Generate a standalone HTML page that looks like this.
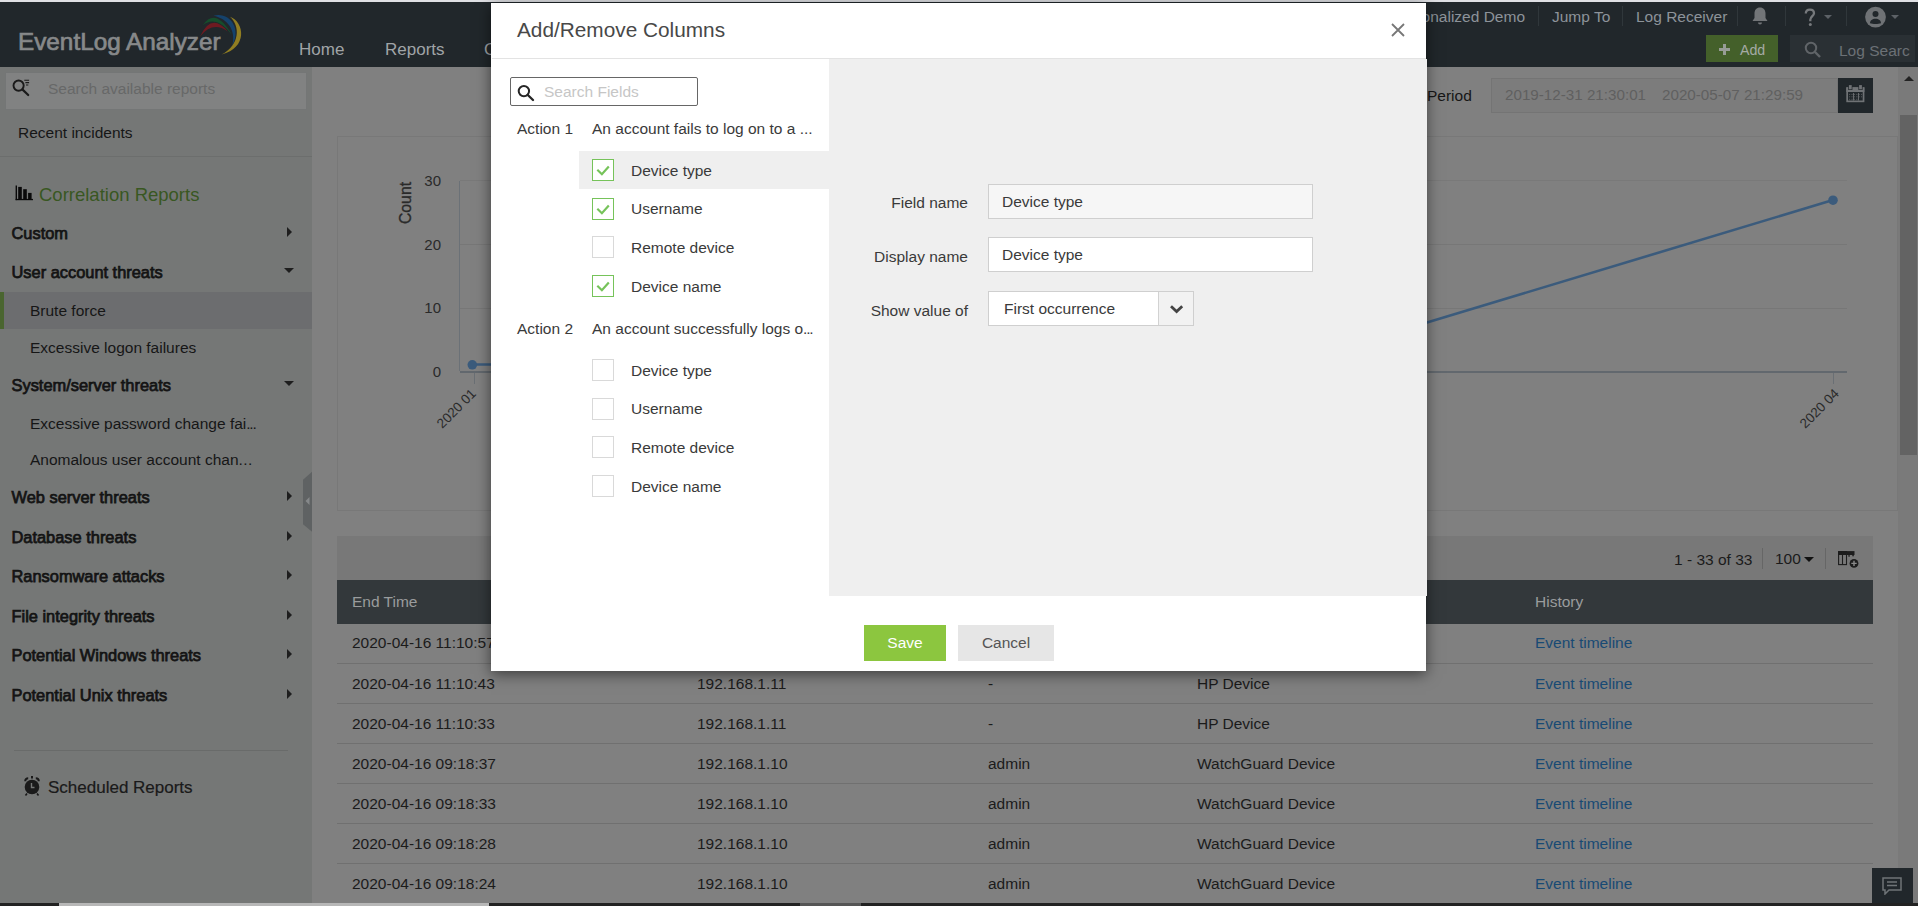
<!DOCTYPE html>
<html><head><meta charset="utf-8">
<style>
*{box-sizing:border-box;margin:0;padding:0}
html,body{width:1918px;height:906px;overflow:hidden;background:#808080;font-family:"Liberation Sans",sans-serif;}
.a{position:absolute;white-space:nowrap}
.sl{font-size:15.5px;color:#161616}
.sb{font-size:16.4px;color:#141414;-webkit-text-stroke:0.75px #141414}
.arr{width:0;height:0;border-top:5px solid transparent;border-bottom:5px solid transparent;border-left:5px solid #1e1e1e}
.arrd{width:0;height:0;border-left:5px solid transparent;border-right:5px solid transparent;border-top:5px solid #1e1e1e}
.hdt{font-size:15.5px;color:#8d939a}
.sep{width:1px;background:#30373b}
.cell{font-size:15.5px;color:#1b1b1b}
.link{font-size:15.5px;color:#184a74}
.rowsep{height:1px;background:#707070}
.ml{font-size:15.5px;color:#3a3a3a}
.cb{width:22px;height:22px;border:1px solid #d9d9d9;background:#fff}
.cb.on{border:1.5px solid #76c35a}
.fl{font-size:15.5px;color:#3a3a3a;text-align:right}
.inp{height:35px;border:1px solid #cfcfcf;background:#fff;font-size:15.5px;color:#3a3a3a;padding-left:13px;line-height:34px}
</style></head>
<body>
<!-- top strip + header -->
<div class="a" style="left:0;top:0;width:1918px;height:2px;background:#dfe0e4"></div>
<div class="a" style="left:0;top:2px;width:1918px;height:65px;background:#21272b"></div>
<div class="a" style="left:18px;top:28px;font-size:24.3px;color:#87898a;-webkit-text-stroke:0.7px #87898a">EventLog Analyzer</div>
<svg class="a" style="left:0;top:0" width="260" height="67" viewBox="0 0 260 67">
  <path d="M200 36.5 Q211.5 12 227.8 31.5 Q213 20.5 200 36.5Z" fill="#6e1a21"/>
  <path d="M202.8 25.3 Q215.5 6.5 232 35 Q216.5 14.5 202.8 25.3Z" fill="#164d2c"/>
  <path d="M213.5 15.8 C229 11.5, 242 28, 232.3 45.8 C236.5 30, 227 18.5, 213.5 15.8Z" fill="#15426c"/>
  <path d="M230 16.8 C244.5 22, 248 48, 221.5 54.6 C240.5 45, 240 25.5, 230 16.8Z" fill="#917e22"/>
</svg>
<div class="a hdt" style="left:299px;top:40px;font-size:17px;color:#a0a4a7">Home</div>
<div class="a hdt" style="left:385px;top:40px;font-size:17px;color:#a0a4a7">Reports</div>
<div class="a hdt" style="left:484px;top:40px;font-size:17px;color:#a0a4a7">C</div>

<div class="a hdt" style="left:1325px;top:8px;width:200px;text-align:right">Personalized Demo</div>
<div class="a sep" style="left:1538px;top:6px;height:20px"></div>
<div class="a hdt" style="left:1552px;top:8px">Jump To</div>
<div class="a sep" style="left:1622px;top:6px;height:20px"></div>
<div class="a hdt" style="left:1636px;top:8px">Log Receiver</div>
<div class="a sep" style="left:1737px;top:6px;height:20px"></div>
<svg class="a" style="left:1751px;top:6px" width="18" height="20" viewBox="0 0 18 20"><path d="M9 1.5c-3.5 0-5.5 2.6-5.5 6v4.5L1.5 15h15l-2-3V7.5c0-3.4-2-6-5.5-6z" fill="#727578"/><path d="M7 16.5h4a2 2 0 0 1-4 0z" fill="#727578"/></svg>
<div class="a sep" style="left:1785px;top:6px;height:20px"></div>
<svg class="a" style="left:1800px;top:6px" width="20" height="22" viewBox="0 0 20 22"><path d="M5.8 7.6C5.8 5 7.6 3.6 10 3.6C12.5 3.6 14 5.2 14 7.2C14 10 10.3 10.4 10.3 13.8V15.2" stroke="#76797c" stroke-width="2.3" fill="none"/><circle cx="10.3" cy="18.4" r="1.5" fill="#76797c"/></svg>
<div class="a arrd" style="left:1824px;top:15px;border-top-color:#5c6166;border-left-width:4px;border-right-width:4px;border-top-width:4px"></div>
<div class="a sep" style="left:1846px;top:6px;height:20px"></div>
<svg class="a" style="left:1865px;top:6px" width="22" height="22" viewBox="0 0 22 22"><circle cx="10.5" cy="11.1" r="10.4" fill="#6f7275"/><circle cx="10.5" cy="8" r="3" fill="#21272b"/><path d="M5 17.3c0-3 2.4-4.6 5.5-4.6s5.5 1.6 5.5 4.6c-1.5 0.5-3.5 0.8-5.5 0.8s-4-0.3-5.5-0.8z" fill="#21272b"/></svg>
<div class="a arrd" style="left:1891px;top:15px;border-top-color:#5c6166;border-left-width:4px;border-right-width:4px;border-top-width:4px"></div>

<div class="a" style="left:1706px;top:35px;width:72px;height:27px;background:#44602a"></div>
<div class="a" style="left:1719px;top:48px;width:11px;height:2.5px;background:#979c96"></div>
<div class="a" style="left:1723.3px;top:44px;width:2.5px;height:11px;background:#979c96"></div>
<div class="a hdt" style="left:1740px;top:42px;font-size:14.2px;color:#a5aaa5">Add</div>
<div class="a" style="left:1790px;top:35px;width:125px;height:27px;background:#2a3034"></div>
<svg class="a" style="left:1804px;top:41px" width="18" height="18" viewBox="0 0 18 18"><circle cx="7" cy="7" r="5.2" stroke="#606468" stroke-width="2" fill="none"/><path d="M11 11l5 5" stroke="#606468" stroke-width="2.4"/></svg>
<div class="a hdt" style="left:1839px;top:41.5px;color:#6c7176;width:71px;overflow:hidden">Log Search</div>

<!-- sidebar -->
<div class="a" style="left:0;top:67px;width:312px;height:836px;background:#757776"></div>
<div class="a" style="left:5px;top:72px;width:302px;height:38px;background:#818282;border:1px solid #747676"></div>
<svg class="a" style="left:10px;top:76px" width="22" height="22" viewBox="10 76 22 22"><circle cx="18.6" cy="85.6" r="5.1" stroke="#1a1a1a" stroke-width="1.9" fill="none"/><path d="M22.6 89.6L28.2 95" stroke="#1a1a1a" stroke-width="2.2" stroke-linecap="round"/><path d="M24.3 80.3h4.8M25.4 82.6h3.7M26 85h2.3" stroke="#1a1a1a" stroke-width="1.1"/></svg>
<div class="a sl" style="left:48px;top:80px;color:#676868">Search available reports</div>
<div class="a sl" style="left:18px;top:124px">Recent incidents</div>
<div class="a" style="left:0;top:156px;width:312px;height:1px;background:#6c6e6d"></div>
<svg class="a" style="left:14px;top:184px" width="21" height="18" viewBox="14 184 21 18"><rect x="15.6" y="185.5" width="1.4" height="14.6" fill="#0a0a0a"/><rect x="15.6" y="198.9" width="17.4" height="1.3" fill="#0a0a0a"/><rect x="18.2" y="186.9" width="3.6" height="12.5" fill="#0a0a0a"/><rect x="23.2" y="189.2" width="3.6" height="10.2" fill="#0a0a0a"/><rect x="28.1" y="192.9" width="3.5" height="6.5" fill="#0a0a0a"/></svg>
<div class="a" style="left:39px;top:184px;font-size:18.5px;color:#395722">Correlation Reports</div>

<div class="a sb" style="left:11.5px;top:224px">Custom</div>
<div class="a arr" style="left:287px;top:227px"></div>
<div class="a sb" style="left:11.5px;top:263px">User account threats</div>
<div class="a arrd" style="left:284px;top:268px"></div>
<div class="a" style="left:0;top:292px;width:312px;height:37px;background:#6c6d6f"></div>
<div class="a" style="left:0;top:292px;width:4px;height:37px;background:#4a6530"></div>
<div class="a sl" style="left:30px;top:302px">Brute force</div>
<div class="a sl" style="left:30px;top:339px">Excessive logon failures</div>
<div class="a sb" style="left:11.5px;top:376px">System/server threats</div>
<div class="a arrd" style="left:284px;top:381px"></div>
<div class="a sl" style="left:30px;top:415px">Excessive password change fai<span style="letter-spacing:-1.2px">...</span></div>
<div class="a sl" style="left:30px;top:451px">Anomalous user account chan<span style="letter-spacing:0.4px">...</span></div>
<div class="a sb" style="left:11.5px;top:488px">Web server threats</div>
<div class="a arr" style="left:287px;top:491px"></div>
<div class="a sb" style="left:11.5px;top:528px">Database threats</div>
<div class="a arr" style="left:287px;top:531px"></div>
<div class="a sb" style="left:11.5px;top:567px">Ransomware attacks</div>
<div class="a arr" style="left:287px;top:570px"></div>
<div class="a sb" style="left:11.5px;top:607px">File integrity threats</div>
<div class="a arr" style="left:287px;top:610px"></div>
<div class="a sb" style="left:11.5px;top:646px">Potential Windows threats</div>
<div class="a arr" style="left:287px;top:649px"></div>
<div class="a sb" style="left:11.5px;top:686px">Potential Unix threats</div>
<div class="a arr" style="left:287px;top:689px"></div>
<div class="a" style="left:14px;top:750px;width:274px;height:1px;background:#696b6a"></div>
<svg class="a" style="left:22px;top:775px" width="20" height="22" viewBox="0 0 20 22"><circle cx="10" cy="12" r="7.3" fill="#1a1a1a"/><path d="M3.2 6.2a3 3 0 0 1 3-3M16.8 6.2a3 3 0 0 0-3-3" stroke="#1a1a1a" stroke-width="2" fill="none"/><rect x="9" y="1" width="2" height="2.5" fill="#1a1a1a"/><path d="M5 18.5l-1.5 2M15 18.5l1.5 2" stroke="#1a1a1a" stroke-width="1.6"/><path d="M9.5 8v4.5h3" stroke="#747675" stroke-width="1.4" fill="none"/></svg>
<div class="a" style="left:48px;top:778px;font-size:17px;color:#1a1a1a;-webkit-text-stroke:0.2px #1a1a1a">Scheduled Reports</div>
<svg class="a" style="left:300px;top:468px" width="14" height="68" viewBox="300 468 14 68"><polygon points="312,471.7 303,479.7 303,524.2 312,531.7" fill="#5f6263"/><polygon points="305.5,501 309.5,497 309.5,505" fill="#85888a"/></svg>

<!-- main content -->
<div class="a sl" style="left:1427px;top:87px">Period</div>
<div class="a" style="left:1491px;top:78px;width:347px;height:35px;background:#7c7c7c;border:1px solid #747474"></div>
<div class="a sl" style="left:1505px;top:86px;color:#606060;font-size:15.2px">2019-12-31 21:30:01</div>
<div class="a sl" style="left:1662px;top:86px;color:#606060;font-size:15.2px">2020-05-07 21:29:59</div>
<div class="a" style="left:1838px;top:78px;width:35px;height:35px;background:#21272b"></div>
<svg class="a" style="left:1838px;top:78px" width="35" height="35" viewBox="0 0 35 35"><rect x="9.15" y="10.15" width="16.4" height="13.2" fill="none" stroke="#6f7275" stroke-width="1.7"/><rect x="8.3" y="9.3" width="18.1" height="4.7" fill="#6f7275"/><rect x="10.2" y="6.5" width="4.2" height="5.5" fill="#21272b"/><rect x="20.4" y="6.5" width="4.2" height="5.5" fill="#21272b"/><rect x="10.9" y="7.1" width="2.8" height="4.2" fill="#6f7275"/><rect x="21.1" y="7.1" width="2.8" height="4.2" fill="#6f7275"/><path d="M11 16.4h13M11 18.8h13M11 21.3h9" stroke="#55595c" stroke-width="1" stroke-dasharray="1.2 1.2"/><path d="M15.5 15v7.5M20.5 15v7.5" stroke="#6f7275" stroke-width="0.9"/></svg>

<!-- chart card -->
<div class="a" style="left:337px;top:136px;width:1561px;height:375px;border:1px solid #787878"></div>
<div class="a" style="left:459px;top:181px;width:1px;height:190px;background:#6b7177"></div>
<div class="a" style="left:460px;top:180px;width:1387px;height:1px;background:#797979"></div>
<div class="a" style="left:460px;top:244px;width:1387px;height:1px;background:#777"></div>
<div class="a" style="left:460px;top:308px;width:1387px;height:1px;background:#777"></div>
<div class="a" style="left:460px;top:371px;width:1387px;height:2px;background:#62686e"></div>
<div class="a" style="left:474px;top:373px;width:1px;height:11px;background:#6a6f74"></div>
<div class="a" style="left:1833px;top:373px;width:1px;height:11px;background:#6a6f74"></div>
<div class="a sl" style="left:412px;top:172px;font-size:15px;color:#2a2a2a;width:29px;text-align:right">30</div>
<div class="a sl" style="left:412px;top:236px;font-size:15px;color:#2a2a2a;width:29px;text-align:right">20</div>
<div class="a sl" style="left:412px;top:299px;font-size:15px;color:#2a2a2a;width:29px;text-align:right">10</div>
<div class="a sl" style="left:412px;top:363px;font-size:15px;color:#2a2a2a;width:29px;text-align:right">0</div>
<div class="a" style="left:381px;top:194px;font-size:15.8px;color:#2a2a2a;-webkit-text-stroke:0.35px #2a2a2a;transform:rotate(-90deg);transform-origin:center;width:50px;text-align:center">Count</div>
<div class="a" style="left:432px;top:401px;font-size:13.5px;color:#2a2a2a;transform:rotate(-45deg)">2020 01</div>
<div class="a" style="left:1795px;top:401px;font-size:13.5px;color:#2a2a2a;transform:rotate(-45deg)">2020 04</div>
<svg class="a" style="left:0;top:0" width="1918" height="906"><polyline points="472.3,364.5 925,364.5 1379,337 1833,200" fill="none" stroke="#3b5b7c" stroke-width="2.6"/><circle cx="472.3" cy="364.8" r="4.8" fill="#3b5b7c"/><circle cx="1833" cy="200.2" r="4.8" fill="#3b5b7c"/></svg>

<!-- table -->
<div class="a" style="left:337px;top:536px;width:1536px;height:44px;background:#787878"></div>
<div class="a sl" style="left:1674px;top:551px;color:#1b1b1b">1 - 33 of 33</div>
<div class="a" style="left:1762px;top:548px;width:1px;height:21px;background:#666"></div>
<div class="a sl" style="left:1775px;top:550px;color:#1b1b1b">100</div>
<div class="a arrd" style="left:1804px;top:557px;border-top-color:#111"></div>
<div class="a" style="left:1825px;top:548px;width:1px;height:21px;background:#666"></div>
<svg class="a" style="left:1837px;top:550px" width="22" height="19" viewBox="1837 550 22 19"><rect x="1838.1" y="551.1" width="16.4" height="3.9" fill="#1d1d1d"/><rect x="1838.6" y="551.6" width="7.9" height="13" fill="none" stroke="#1d1d1d" stroke-width="1.1"/><path d="M1842.5 552v13" stroke="#1d1d1d" stroke-width="1.1"/><rect x="1848.4" y="554.5" width="1.3" height="2.3" fill="#1d1d1d"/><rect x="1852.3" y="554.5" width="1.5" height="1.8" fill="#1d1d1d"/><circle cx="1854" cy="563.4" r="4.4" fill="#1d1d1d"/><path d="M1851.3 563.4h5.4M1854 560.7v5.4" stroke="#8a8a8a" stroke-width="1.4"/></svg>
<div class="a" style="left:337px;top:580px;width:1536px;height:44px;background:#33383b"></div>
<div class="a sl" style="left:352px;top:593px;color:#9a9c9d">End Time</div>
<div class="a sl" style="left:1535px;top:593px;color:#9a9c9d">History</div>

<div class="a rowsep" style="left:337px;top:663px;width:1536px"></div>
<div class="a rowsep" style="left:337px;top:703px;width:1536px"></div>
<div class="a rowsep" style="left:337px;top:743px;width:1536px"></div>
<div class="a rowsep" style="left:337px;top:783px;width:1536px"></div>
<div class="a rowsep" style="left:337px;top:823px;width:1536px"></div>
<div class="a rowsep" style="left:337px;top:863px;width:1536px"></div>

<div class="a cell" style="left:352px;top:634px">2020-04-16 11:10:57</div>
<div class="a link" style="left:1535px;top:634px">Event timeline</div>
<div class="a cell" style="left:352px;top:675px">2020-04-16 11:10:43</div><div class="a cell" style="left:697px;top:675px">192.168.1.11</div><div class="a cell" style="left:988px;top:675px">-</div><div class="a cell" style="left:1197px;top:675px">HP Device</div><div class="a link" style="left:1535px;top:675px">Event timeline</div>
<div class="a cell" style="left:352px;top:715px">2020-04-16 11:10:33</div><div class="a cell" style="left:697px;top:715px">192.168.1.11</div><div class="a cell" style="left:988px;top:715px">-</div><div class="a cell" style="left:1197px;top:715px">HP Device</div><div class="a link" style="left:1535px;top:715px">Event timeline</div>
<div class="a cell" style="left:352px;top:755px">2020-04-16 09:18:37</div><div class="a cell" style="left:697px;top:755px">192.168.1.10</div><div class="a cell" style="left:988px;top:755px">admin</div><div class="a cell" style="left:1197px;top:755px">WatchGuard Device</div><div class="a link" style="left:1535px;top:755px">Event timeline</div>
<div class="a cell" style="left:352px;top:795px">2020-04-16 09:18:33</div><div class="a cell" style="left:697px;top:795px">192.168.1.10</div><div class="a cell" style="left:988px;top:795px">admin</div><div class="a cell" style="left:1197px;top:795px">WatchGuard Device</div><div class="a link" style="left:1535px;top:795px">Event timeline</div>
<div class="a cell" style="left:352px;top:835px">2020-04-16 09:18:28</div><div class="a cell" style="left:697px;top:835px">192.168.1.10</div><div class="a cell" style="left:988px;top:835px">admin</div><div class="a cell" style="left:1197px;top:835px">WatchGuard Device</div><div class="a link" style="left:1535px;top:835px">Event timeline</div>
<div class="a cell" style="left:352px;top:875px">2020-04-16 09:18:24</div><div class="a cell" style="left:697px;top:875px">192.168.1.10</div><div class="a cell" style="left:988px;top:875px">admin</div><div class="a cell" style="left:1197px;top:875px">WatchGuard Device</div><div class="a link" style="left:1535px;top:875px">Event timeline</div>

<!-- scrollbar -->
<div class="a" style="left:1898px;top:67px;width:20px;height:836px;background:#7a7a7a"></div>
<div class="a arrd" style="left:1903.5px;top:75.5px;border-top:none;border-bottom:5.5px solid #232323;border-left-width:5px;border-right-width:5px"></div>
<div class="a" style="left:1900px;top:115px;width:17px;height:340px;background:#636363"></div>
<!-- chat btn -->
<div class="a" style="left:1872px;top:868px;width:41px;height:35px;background:#21272b"></div>
<svg class="a" style="left:1882px;top:877px" width="20" height="18" viewBox="0 0 20 18"><path d="M1 1h18v12H7l-4 4v-4H1z" fill="none" stroke="#6f7477" stroke-width="1.5"/><path d="M5 5h10M5 8.5h10" stroke="#6f7477" stroke-width="1.3"/></svg>
<!-- bottom strip -->
<div class="a" style="left:0;top:903px;width:1918px;height:3px;background:#222"></div>
<div class="a" style="left:59px;top:903px;width:430px;height:3px;background:#b7b7b7"></div>
<div class="a" style="left:800px;top:903px;width:61px;height:3px;background:#555"></div>

<!-- MODAL -->
<div class="a" style="left:491px;top:3px;width:935px;height:668px;background:#fff;box-shadow:0 3px 14px rgba(0,0,0,.55)"></div>
<div class="a" style="left:517px;top:18px;font-size:20.8px;color:#484848">Add/Remove Columns</div>
<svg class="a" style="left:1391px;top:23px" width="14" height="14" viewBox="0 0 14 14"><path d="M1 1l12 12M13 1L1 13" stroke="#777" stroke-width="1.8"/></svg>
<div class="a" style="left:492px;top:58px;width:934px;height:1px;background:#e3e3e3"></div>
<div class="a" style="left:829px;top:59px;width:598px;height:537px;background:#efefef"></div>

<div class="a" style="left:510px;top:77px;width:188px;height:29px;border:1px solid #666;border-radius:2px"></div>
<svg class="a" style="left:514px;top:82px" width="22" height="22" viewBox="514 82 22 22"><circle cx="523.9" cy="91.1" r="5.2" stroke="#262626" stroke-width="2" fill="none"/><path d="M527.8 95L533 100" stroke="#262626" stroke-width="2.4" stroke-linecap="round"/></svg>
<div class="a ml" style="left:544px;top:83px;color:#c6c6c6">Search Fields</div>
<div class="a ml" style="left:517px;top:120px">Action 1</div>
<div class="a ml" style="left:592px;top:120px">An account fails to log on to a ...</div>
<div class="a" style="left:579px;top:151px;width:250px;height:38px;background:#efefef"></div>
<div class="a cb on" style="left:592px;top:159px"><svg width="18" height="18" viewBox="0 0 18 18" style="position:absolute;left:0;top:0"><path d="M4.3 9.8L8.9 14.2L15.8 6.5" stroke="#76c35a" stroke-width="2.2" fill="none"/></svg></div>
<div class="a cb on" style="left:592px;top:198px"><svg width="18" height="18" viewBox="0 0 18 18" style="position:absolute;left:0;top:0"><path d="M4.3 9.8L8.9 14.2L15.8 6.5" stroke="#76c35a" stroke-width="2.2" fill="none"/></svg></div>
<div class="a cb" style="left:592px;top:236px"></div>
<div class="a cb on" style="left:592px;top:275px"><svg width="18" height="18" viewBox="0 0 18 18" style="position:absolute;left:0;top:0"><path d="M4.3 9.8L8.9 14.2L15.8 6.5" stroke="#76c35a" stroke-width="2.2" fill="none"/></svg></div>
<div class="a ml" style="left:631px;top:162px">Device type</div>
<div class="a ml" style="left:631px;top:200px">Username</div>
<div class="a ml" style="left:631px;top:239px">Remote device</div>
<div class="a ml" style="left:631px;top:278px">Device name</div>
<div class="a ml" style="left:517px;top:320px">Action 2</div>
<div class="a ml" style="left:592px;top:320px">An account successfully logs o<span style="letter-spacing:-1.2px">...</span></div>
<div class="a cb" style="left:592px;top:359px"></div>
<div class="a cb" style="left:592px;top:398px"></div>
<div class="a cb" style="left:592px;top:436px"></div>
<div class="a cb" style="left:592px;top:475px"></div>
<div class="a ml" style="left:631px;top:362px">Device type</div>
<div class="a ml" style="left:631px;top:400px">Username</div>
<div class="a ml" style="left:631px;top:439px">Remote device</div>
<div class="a ml" style="left:631px;top:478px">Device name</div>

<div class="a fl" style="left:840px;top:194px;width:128px">Field name</div>
<div class="a fl" style="left:840px;top:248px;width:128px">Display name</div>
<div class="a fl" style="left:840px;top:302px;width:128px">Show value of</div>
<div class="a inp" style="left:988px;top:184px;width:325px;background:#f6f6f6">Device type</div>
<div class="a inp" style="left:988px;top:237px;width:325px">Device type</div>
<div class="a inp" style="left:988px;top:291px;width:206px;padding-left:15px">First occurrence</div>
<div class="a" style="left:1158px;top:292px;width:35px;height:33px;background:#f2f2f2;border-left:1px solid #d2d2d2"></div>
<svg class="a" style="left:1166px;top:300px" width="20" height="16" viewBox="1166 300 20 16"><path d="M1171 306.3L1176.6 311.5L1182.2 306.3" stroke="#444" stroke-width="2.8" fill="none"/></svg>

<div class="a" style="left:864px;top:625px;width:82px;height:36px;background:#8cc63f"></div>
<div class="a" style="left:864px;top:634px;width:82px;text-align:center;font-size:15.5px;color:#fff">Save</div>
<div class="a" style="left:958px;top:625px;width:96px;height:36px;background:#e6e6e6"></div>
<div class="a" style="left:958px;top:634px;width:96px;text-align:center;font-size:15.5px;color:#555">Cancel</div>
</body></html>
